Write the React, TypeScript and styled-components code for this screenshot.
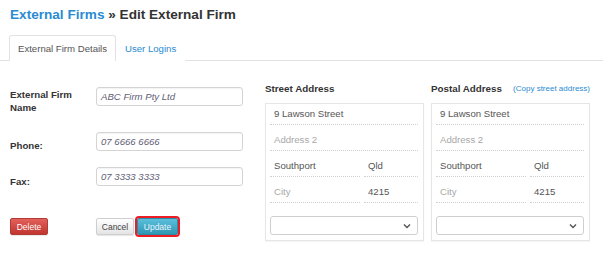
import React from 'react'
import styled, { createGlobalStyle } from 'styled-components'

const GlobalStyle = createGlobalStyle`
  body {
    margin: 0;
    background: #fff;
    font-family: "Liberation Sans", Arial, sans-serif;
    color: #333;
  }
`

interface Address {
  line1: string
  line2: string
  suburb: string
  state: string
  city: string
  postcode: string
}

const street: Address = {
  line1: '9 Lawson Street',
  line2: '',
  suburb: 'Southport',
  state: 'Qld',
  city: '',
  postcode: '4215',
}

const Chevron = () => (
  <svg width="8" height="6" viewBox="0 0 8 6">
    <path d="M1 1.5 L4 4.5 L7 1.5" fill="none" stroke="#555" strokeWidth="1.4" />
  </svg>
)

const AddressBox: React.FC<{ title: string; address: Address; copyLink?: boolean }> = ({
  title,
  address,
  copyLink,
}) => (
  <StyledAddressCol>
    <StyledAddressHead>
      <StyledHeading>{title}</StyledHeading>
      {copyLink && <StyledCopyLink>(Copy street address)</StyledCopyLink>}
    </StyledAddressHead>
    <StyledAddressBox>
      <StyledField>{address.line1}</StyledField>
      <StyledField placeholder>Address 2</StyledField>
      <StyledFieldRow>
        <StyledField grow>{address.suburb}</StyledField>
        <StyledField width={50}>{address.state}</StyledField>
      </StyledFieldRow>
      <StyledFieldRow>
        <StyledField grow placeholder>
          City
        </StyledField>
        <StyledField width={50}>{address.postcode}</StyledField>
      </StyledFieldRow>
      <StyledSelect>
        <Chevron />
      </StyledSelect>
    </StyledAddressBox>
  </StyledAddressCol>
)

const App: React.FC = () => {
  return (
    <>
      <GlobalStyle />
      <StyledPage>
        <StyledTitle>
          <StyledTitleLink>External Firms</StyledTitleLink> » Edit External Firm
        </StyledTitle>
        <StyledTabs>
          <StyledTab active>External Firm Details</StyledTab>
          <StyledTab>User Logins</StyledTab>
        </StyledTabs>
        <StyledContent>
          <StyledForm>
            <StyledFormRow>
              <StyledLabel offset={1}>
                External Firm
                <br />
                Name
              </StyledLabel>
              <StyledInput>ABC Firm Pty Ltd</StyledInput>
            </StyledFormRow>
            <StyledFormRow gap={18}>
              <StyledLabel offset={7}>Phone:</StyledLabel>
              <StyledInput>07 6666 6666</StyledInput>
            </StyledFormRow>
            <StyledFormRow gap={15}>
              <StyledLabel offset={8}>Fax:</StyledLabel>
              <StyledInput>07 3333 3333</StyledInput>
            </StyledFormRow>
            <StyledButtons>
              <StyledButton kind="danger">Delete</StyledButton>
              <StyledButtonGroup>
                <StyledButton kind="default">Cancel</StyledButton>
                <StyledButton kind="info" focused>
                  Update
                </StyledButton>
              </StyledButtonGroup>
            </StyledButtons>
          </StyledForm>
          <AddressBox title="Street Address" address={street} />
          <AddressBox title="Postal Address" address={street} copyLink />
        </StyledContent>
      </StyledPage>
    </>
  )
}

const StyledPage = styled.div`
  width: 603px;
  height: 267px;
  overflow: hidden;
`

const StyledTitle = styled.h1`
  margin: 0;
  padding: 5px 0 0 10px;
  font-size: 13.6px;
  line-height: 20px;
  font-weight: bold;
  color: #333;
`

const StyledTitleLink = styled.span`
  color: #2a8bd2;
`

const StyledTabs = styled.div`
  display: flex;
  margin-top: 10px;
  padding-left: 9px;
  height: 25px;
  border-bottom: 1px solid #e2e2e2;
`

const StyledTab = styled.div<{ active?: boolean }>`
  box-sizing: border-box;
  display: flex;
  align-items: center;
  height: 26px;
  margin-bottom: -1px;
  padding: 0 8px;
  font-size: 9.6px;
  color: ${(p) => (p.active ? '#555' : '#2a8bd2')};
  background: #fff;
  border: 1px solid ${(p) => (p.active ? '#e2e2e2' : 'transparent')};
  border-bottom: none;
  border-radius: 3px 3px 0 0;
`

const StyledContent = styled.div`
  display: flex;
  padding: 18px 0 0 10px;
`

const StyledForm = styled.div`
  width: 233px;
  margin-right: 22px;
  padding-top: 8px;
`

const StyledFormRow = styled.div<{ gap?: number }>`
  display: flex;
  align-items: flex-start;
  margin-top: ${(p) => p.gap || 0}px;
`

const StyledLabel = styled.div<{ offset: number }>`
  width: 86px;
  padding-top: ${(p) => p.offset}px;
  font-size: 9.7px;
  line-height: 13px;
  font-weight: bold;
  color: #333;
`

const StyledInput = styled.div`
  box-sizing: border-box;
  width: 147px;
  height: 19px;
  padding: 0 4px;
  border: 1px solid #d4d4d4;
  border-radius: 3px;
  box-shadow: inset 0 1px 1px rgba(0, 0, 0, 0.05);
  font-size: 9.6px;
  line-height: 17px;
  font-style: italic;
  color: #5f6075;
`

const StyledButtons = styled.div`
  display: flex;
  align-items: center;
  margin-top: 30px;
`

const StyledButtonGroup = styled.div`
  display: flex;
  gap: 3px;
  margin-left: 48px;
`

const buttonColors = {
  danger: { top: '#e2605b', bottom: '#c0352f', border: '#b33a35', text: '#fff' },
  default: { top: '#ffffff', bottom: '#e4e4e4', border: '#cfcfcf', text: '#444' },
  info: { top: '#5bbfdc', bottom: '#2f96b4', border: '#2c8aa6', text: '#e8f6fb' },
}

const StyledButton = styled.div<{ kind: 'danger' | 'default' | 'info'; focused?: boolean }>`
  box-sizing: border-box;
  display: flex;
  align-items: center;
  justify-content: center;
  height: 17px;
  min-width: ${(p) => (p.focused ? 41 : 38)}px;
  padding: 0 4px;
  font-size: 8.5px;
  color: ${(p) => buttonColors[p.kind].text};
  background: linear-gradient(${(p) => buttonColors[p.kind].top}, ${(p) => buttonColors[p.kind].bottom});
  border: 1px solid ${(p) => buttonColors[p.kind].border};
  border-radius: 2px;
  box-shadow: 0 1px 1px rgba(0, 0, 0, 0.1);
  outline: ${(p) => (p.focused ? '2px solid #ec1c24' : 'none')};
  outline-offset: 0;
`

const StyledAddressCol = styled.div`
  width: 159px;
  margin-right: 7px;
`

const StyledAddressHead = styled.div`
  display: flex;
  align-items: center;
  justify-content: space-between;
  height: 18px;
`

const StyledHeading = styled.div`
  font-size: 9.8px;
  font-weight: bold;
  color: #333;
`

const StyledCopyLink = styled.div`
  font-size: 8px;
  color: #2a8bd2;
`

const StyledAddressBox = styled.div`
  box-sizing: border-box;
  margin-top: 6px;
  height: 138px;
  padding: 0 5px 0 4px;
  border: 1px solid #e6e6e6;
  box-shadow: 0 1px 1px rgba(0, 0, 0, 0.04);
`

const StyledFieldRow = styled.div`
  display: flex;
  gap: 4px;
`

const StyledField = styled.div<{ placeholder?: boolean; grow?: boolean; width?: number }>`
  flex: ${(p) => (p.grow ? 1 : 'none')};
  width: ${(p) => (p.width ? `${p.width}px` : 'auto')};
  height: 20px;
  margin-bottom: 5px;
  padding-left: 4px;
  font-size: 9.6px;
  line-height: 20px;
  color: ${(p) => (p.placeholder ? '#a8a8a8' : '#555')};
  border-bottom: 1px dotted #d0d0d0;
`

const StyledSelect = styled.div`
  box-sizing: border-box;
  display: flex;
  align-items: center;
  justify-content: flex-end;
  height: 19px;
  margin-top: 8px;
  padding-right: 6px;
  background: #fff;
  border: 1px solid #cfcfcf;
  border-radius: 3px;
`

export default App
